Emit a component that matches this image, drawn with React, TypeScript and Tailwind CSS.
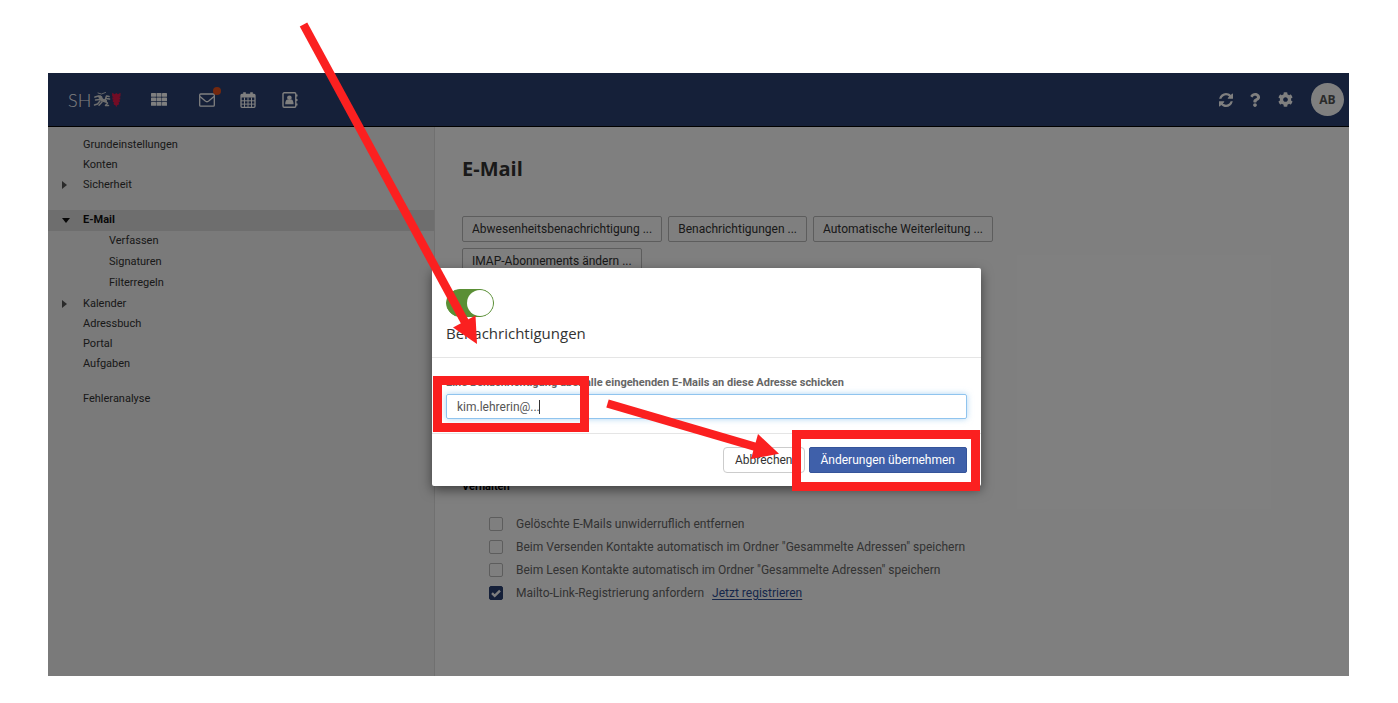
import { useState } from "react";
import { FaCog, FaQuestion } from "react-icons/fa";

interface NavItem {
  label: string;
  open?: boolean;
  closed?: boolean;
  children?: string[];
}

const navGroups: NavItem[][] = [
  [{ label: "Grundeinstellungen" }, { label: "Konten" }, { label: "Sicherheit", closed: true }],
  [
    { label: "E-Mail", open: true, children: ["Verfassen", "Signaturen", "Filterregeln"] },
    { label: "Kalender", closed: true },
    { label: "Adressbuch" },
    { label: "Portal" },
    { label: "Aufgaben" },
  ],
  [{ label: "Fehleranalyse" }],
];

const actions = [
  "Abwesenheitsbenachrichtigung ...",
  "Benachrichtigungen ...",
  "Automatische Weiterleitung ...",
  "IMAP-Abonnements ändern ...",
];

const options = [
  { id: "purge", label: "Gelöschte E-Mails unwiderruflich entfernen", checked: false },
  { id: "collect-sent", label: 'Beim Versenden Kontakte automatisch im Ordner "Gesammelte Adressen" speichern', checked: false },
  { id: "collect-read", label: 'Beim Lesen Kontakte automatisch im Ordner "Gesammelte Adressen" speichern', checked: false },
  { id: "mailto", label: "Mailto-Link-Registrierung anfordern", checked: true },
];

function Logo() {
  return (
    <div className="flex items-center gap-0.5" aria-label="SH">
      <span className="font-['Lato'] text-lg leading-none font-light">SH</span>
      <svg viewBox="0 0 28 17" className="h-[17px] w-7">
        <g fill="none" stroke="#ddd" strokeLinecap="round" strokeLinejoin="round">
          <path d="M5 2l3.500 1 4-1.500" strokeWidth="0.900" />
          <path d="M2 6l3.500-1 3 1" strokeWidth="1.800" />
          <path d="M7 6l2 3 3.500 1" strokeWidth="3.200" />
          <path d="M12 9.500l1.500-4.500 2.500.5M13.500 7.500l3 .5" strokeWidth="1.600" />
          <path d="M6.500 8.500l-4 .5M7 10l-2.500 3-3 1M9 11l-3 3.300" strokeWidth="1.400" />
          <path d="M12.500 10.500l2 1.500-2 2.500h3" strokeWidth="1.500" />
        </g>
        <path
          d="M19.200 1.800l2.500 1.500L23.300 2l1.600 1.300 2.600-1.500v3.400l-1.500 1 1.300.3v1.700l-1.600.7 1.100.4v1.500l-1.500.7.8.5-.5 1.800-1.500.4-.8 2-.8-2-1.500-.4-.5-1.800.8-.5-1.500-.7V9.300l1.100-.4-1.600-.7V6.500l1.300-.3-1.500-1z"
          fill="#e5184a"
        />
      </svg>
    </div>
  );
}

function GridIcon() {
  return (
    <svg viewBox="0 0 16 13" className="h-[13px] w-4" fill="currentColor">
      {[0, 4.5, 9].map((y) =>
        [0, 5.5, 11].map((x) => <rect key={`${x}-${y}`} x={x} y={y} width="5" height="3.800" rx="0.600" />)
      )}
    </svg>
  );
}

function MailIcon() {
  return (
    <svg viewBox="0 0 16 14" className="h-[14px] w-4" fill="none" stroke="currentColor" strokeWidth="1.300">
      <rect x="0.700" y="1" width="14.600" height="12.200" rx="1" />
      <path d="M1 3.500l5.300 4.600q1.700 1.300 3.400 0L15 3.500" />
    </svg>
  );
}

function CalendarIcon() {
  return (
    <svg viewBox="0 0 16 16" className="h-4 w-4" fill="none" stroke="currentColor">
      <rect x="1" y="2.500" width="14" height="12.800" rx="1" strokeWidth="1.300" />
      <path d="M1 4h14" strokeWidth="3" />
      <path d="M4.500 5.500v10M8 5.500v10M11.500 5.500v10M1 8.800h14M1 12.100h14" strokeWidth="1" />
      <path d="M4.500 0.300v3.500M11.500 0.300v3.500" strokeWidth="2.600" />
    </svg>
  );
}

function AddressBookIcon() {
  return (
    <svg viewBox="0 0 16 16" className="h-4 w-4">
      <rect x="1" y="0.800" width="12.800" height="14.400" rx="1.200" fill="none" stroke="currentColor" strokeWidth="1.400" />
      <path d="M14 2.500h1.500v2H14zM14 7h1.500v2H14zM14 11.500h1.500v2H14z" fill="currentColor" />
      <circle cx="7.400" cy="5.700" r="2.300" fill="currentColor" />
      <path d="M3.200 12.200c0-3 1-4.700 2.400-4.700q1.800 1.200 3.600 0c1.400 0 2.400 1.700 2.400 4.700z" fill="currentColor" />
    </svg>
  );
}

function RefreshIcon() {
  return (
    <svg viewBox="0 0 1536 1536" className="h-[14px] w-[14px]" fill="currentColor">
      <path d="M1511 928q0 5-1 7-64 268-268 434.500T764 1536q-146 0-282.500-55T238 1324l-129 129q-19 19-45 19t-45-19-19-45V960q0-26 19-45t45-19h448q26 0 45 19t19 45-19 45l-137 137q71 66 161 102t187 36q134 0 250-65t186-179q11-17 53-117 8-23 30-23h192q13 0 22.500 9.500t9.500 22.500zm25-800v448q0 26-19 45t-45 19h-448q-26 0-45-19t-19-45 19-45l138-138Q969 256 768 256q-134 0-250 65T332 500q-11 17-53 117-8 23-30 23H50q-13 0-22.500-9.500T18 608v-7q65-268 270-434.500T768 0q146 0 284 55.500T1297 212l130-129q19-19 45-19t45 19 19 45z" />
    </svg>
  );
}

function TopBar() {
  return (
    <header className="flex h-[54px] items-center border-b border-black bg-[#2a4073] pr-[5px] pl-5 text-white">
      <Logo />
      <nav className="ml-[30px] flex items-center">
        <button aria-label="Apps"><GridIcon /></button>
        <button aria-label="E-Mail" className="relative ml-8">
          <MailIcon />
          <span className="absolute -top-1.5 -right-1.5 h-2 w-2 rounded-full bg-[#e8501c]" />
        </button>
        <button aria-label="Kalender" className="ml-[25px]"><CalendarIcon /></button>
        <button aria-label="Adressbuch" className="ml-[26px]"><AddressBookIcon /></button>
      </nav>
      <div className="ml-auto flex items-center">
        <button aria-label="Aktualisieren"><RefreshIcon /></button>
        <button aria-label="Hilfe" className="ml-[15px]"><FaQuestion size={14} /></button>
        <button aria-label="Einstellungen" className="ml-4"><FaCog size={15} /></button>
        <button className="ml-[18px] h-[33px] w-[33px] rounded-full bg-white font-['Open_Sans'] text-xs font-bold text-[#555]">
          AB
        </button>
      </div>
    </header>
  );
}

function Sidebar() {
  return (
    <aside className="flex w-[387px] shrink-0 flex-col gap-[15px] border-r border-[#e0e0e0] bg-[#f4f4f4] pt-2 text-[11px]">
      {navGroups.map((group) => (
        <ul key={group[0].label}>
          {group.map((item) => (
            <li key={item.label}>
              <a
                href="#"
                className={
                  item.open
                    ? "flex h-[21px] items-center bg-[#dcdcdc] pl-3.5 font-bold text-[#111]"
                    : "flex h-5 items-center pl-3.5"
                }
              >
                <span className="w-[21px]">
                  {item.open && (
                    <svg viewBox="0 0 8 5" className="h-[5px] w-2"><path d="M0 0h8L4 5z" fill="#111" /></svg>
                  )}
                  {item.closed && (
                    <svg viewBox="0 0 5 8" className="h-2 w-[5px]"><path d="M0 0v8l5-4z" fill="#555" /></svg>
                  )}
                </span>
                {item.label}
              </a>
              {item.children && (
                <ul>
                  {item.children.map((child) => (
                    <li key={child}>
                      <a href="#" className="flex h-[21px] items-center pl-[61px]">{child}</a>
                    </li>
                  ))}
                </ul>
              )}
            </li>
          ))}
        </ul>
      ))}
    </aside>
  );
}

function Settings() {
  return (
    <main className="flex-1 pt-7 pb-[72px] pl-[27px]">
      <h1 className="font-['Open_Sans'] text-xl leading-7 font-bold">E-Mail</h1>
      <div className="mt-[33px] flex max-w-[560px] flex-wrap gap-x-1.5 gap-y-1.5">
        {actions.map((action) => (
          <button key={action} className="h-[26px] rounded-xs border border-[#bbb] px-[9px] text-xs">
            {action}
          </button>
        ))}
      </div>
      <section className="mt-[205px]">
        <h2 className="text-[11px] leading-4 font-bold text-black">Verhalten</h2>
        <div className="mt-[17px] pl-[27px] text-xs text-[#666]">
          {options.map((option) => (
            <div key={option.id} className="flex h-[23px] items-center">
              <span className="relative h-3.5 w-3.5">
                <input
                  id={option.id}
                  type="checkbox"
                  defaultChecked={option.checked}
                  className="peer block h-3.5 w-3.5 appearance-none rounded-xs border border-[#bbb] checked:border-[#2a4073] checked:bg-[#2a4073]"
                />
                <svg viewBox="0 0 14 14" className="pointer-events-none absolute inset-0 hidden peer-checked:block">
                  <path d="M3 7.200l2.700 2.700 5.300-5.300" fill="none" stroke="#fff" strokeWidth="2.400" />
                </svg>
              </span>
              <label htmlFor={option.id} className="ml-[13px]">{option.label}</label>
              {option.id === "mailto" && (
                <a href="#" className="ml-2 text-[#2f4f96] underline underline-offset-2">Jetzt registrieren</a>
              )}
            </div>
          ))}
        </div>
      </section>
    </main>
  );
}

// red arrows and frames that walk the reader through the dialog
function Guide() {
  return (
    <svg className="pointer-events-none absolute top-0 left-0 h-full w-full overflow-visible" aria-hidden="true">
      <g fill="none" stroke="#fb2020">
        <path d="M-128.500-243.500L34 56" strokeWidth="8.500" />
        <path d="M175.500 135.500L324 179" strokeWidth="8.500" />
        <rect x="5.500" y="112.500" width="147" height="47" strokeWidth="9" />
        <rect x="364.500" y="166.500" width="179" height="52" strokeWidth="9" />
      </g>
      <path d="M21 59.500L43.500 47.500 45 76zM326 166L319 191l28-5.300z" fill="#fb2020" />
    </svg>
  );
}

function NotificationDialog() {
  const [enabled, setEnabled] = useState(true);
  const [address, setAddress] = useState("kim.lehrerin@...");

  return (
    <div role="dialog" aria-labelledby="dialog-title" className="relative w-[549px] rounded-xs bg-white shadow-[0_4px_12px_rgba(0,0,0,0.5)]">
      <div className="border-b border-[#e5e5e5] px-3.5 pt-[21px] pb-3">
        <input
          type="checkbox"
          aria-labelledby="dialog-title"
          checked={enabled}
          onChange={(e) => setEnabled(e.target.checked)}
          className="block h-7 w-12 appearance-none rounded-full border border-[#5a8f35] bg-[#ccc] before:block before:h-[26px] before:w-[26px] before:rounded-full before:bg-white checked:bg-[#5a8f35] checked:before:ml-5"
        />
        <h2 id="dialog-title" className="mt-1 font-['Open_Sans'] text-[15px] leading-6">Benachrichtigungen</h2>
      </div>
      <div className="px-3.5 pt-[15px] pb-3.5">
        <label htmlFor="address" className="mb-px block text-[11px] leading-5 font-bold text-[#666]">
          Eine Benachrichtigung über alle eingehenden E-Mails an diese Adresse schicken
        </label>
        <div className="relative">
          <input
            id="address"
            type="text"
            value={address}
            onChange={(e) => setAddress(e.target.value)}
            className="block h-[25px] w-full rounded-xs border border-[#90c4ee] px-2.5 text-xs text-[#555] shadow-[0_0_6px_rgba(120,185,235,0.6)] outline-none"
          />
          <span className="absolute top-1.5 left-[93px] h-3.5 w-px bg-[#333]" />
        </div>
      </div>
      <div className="flex justify-end gap-1 border-t border-[#e5e5e5] px-3.5 py-[13px] text-xs">
        <button className="h-[26px] rounded-sm border border-[#ccc] px-[11px]">Abbrechen</button>
        <button className="h-[26px] rounded-xs border border-[#35549a] bg-[#3f60aa] px-[11px] text-white">
          Änderungen übernehmen
        </button>
      </div>
      <Guide />
    </div>
  );
}

export default function App() {
  return (
    <div className="bg-white pt-[73px] pr-[49px] pb-[27px] pl-12 font-['Roboto','Noto_Sans',sans-serif] text-[#333]">
      <div className="relative bg-white">
        <TopBar />
        <div className="flex">
          <Sidebar />
          <Settings />
        </div>
        <div className="absolute inset-0 flex items-start justify-center bg-black/50 pt-[195px] pl-4">
          <NotificationDialog />
        </div>
      </div>
    </div>
  );
}
